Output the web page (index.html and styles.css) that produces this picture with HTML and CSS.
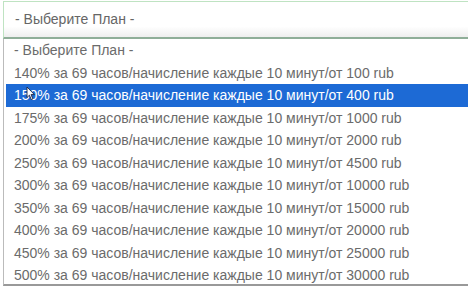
FILE: index.html
```html
<!DOCTYPE html>
<html lang="ru">
<head>
  <meta charset="UTF-8">
  <title>Выберите План</title>
  <link rel="stylesheet" href="styles.css">
</head>
<body>
  <div class="page">
    <div class="select">- Выберите План -</div>
    <ul class="options">
      <li>- Выберите План -</li>
      <li>140% за 69 часов/начисление каждые 10 минут/от 100 rub</li>
      <li class="active">150% за 69 часов/начисление каждые 10 минут/от 400 rub</li>
      <li>175% за 69 часов/начисление каждые 10 минут/от 1000 rub</li>
      <li>200% за 69 часов/начисление каждые 10 минут/от 2000 rub</li>
      <li>250% за 69 часов/начисление каждые 10 минут/от 4500 rub</li>
      <li>300% за 69 часов/начисление каждые 10 минут/от 10000 rub</li>
      <li>350% за 69 часов/начисление каждые 10 минут/от 15000 rub</li>
      <li>400% за 69 часов/начисление каждые 10 минут/от 20000 rub</li>
      <li>450% за 69 часов/начисление каждые 10 минут/от 25000 rub</li>
      <li>500% за 69 часов/начисление каждые 10 минут/от 30000 rub</li>
    </ul>
    <svg class="cursor" width="10" height="15" viewBox="0 0 10 15">
      <path d="M1 1 L1 11.5 L3.4 9.2 L5.3 13.6 L6.9 12.9 L5 8.6 L8.4 8.6 Z" fill="#fff" stroke="#1a2440" stroke-width="0.9"/>
    </svg>
  </div>
</body>
</html>
```

FILE: styles.css
```css
body {
  margin: 0;
  background: #fff;
  font-family: "Liberation Sans", Arial, sans-serif;
  overflow: hidden;
}
.page {
  position: relative;
  padding-left: 3px;
  padding-top: 1px;
}
.select {
  height: 35px;
  line-height: 35px;
  padding-left: 11px;
  border: 1px solid #bfe3c2;
  border-right: none;
  border-bottom: 2px solid #8fae98;
  background: linear-gradient(#fff 70%, #eeeeee);
  color: #666;
  font-size: 14px;
}
.options {
  list-style: none;
  margin: 0;
  padding: 0 0 0 2px;
  border-left: 1px solid #bbb;
  border-bottom: 2px solid #999;
  height: 245px;
}
.options li {
  height: 22.5px;
  line-height: 22.5px;
  padding-left: 8px;
  color: #6b6b6b;
  font-size: 14px;
  white-space: nowrap;
}
.options li.active {
  background: #1d6ad5;
  color: #fff;
}
.cursor {
  position: absolute;
  left: 26px;
  top: 86px;
}
```
